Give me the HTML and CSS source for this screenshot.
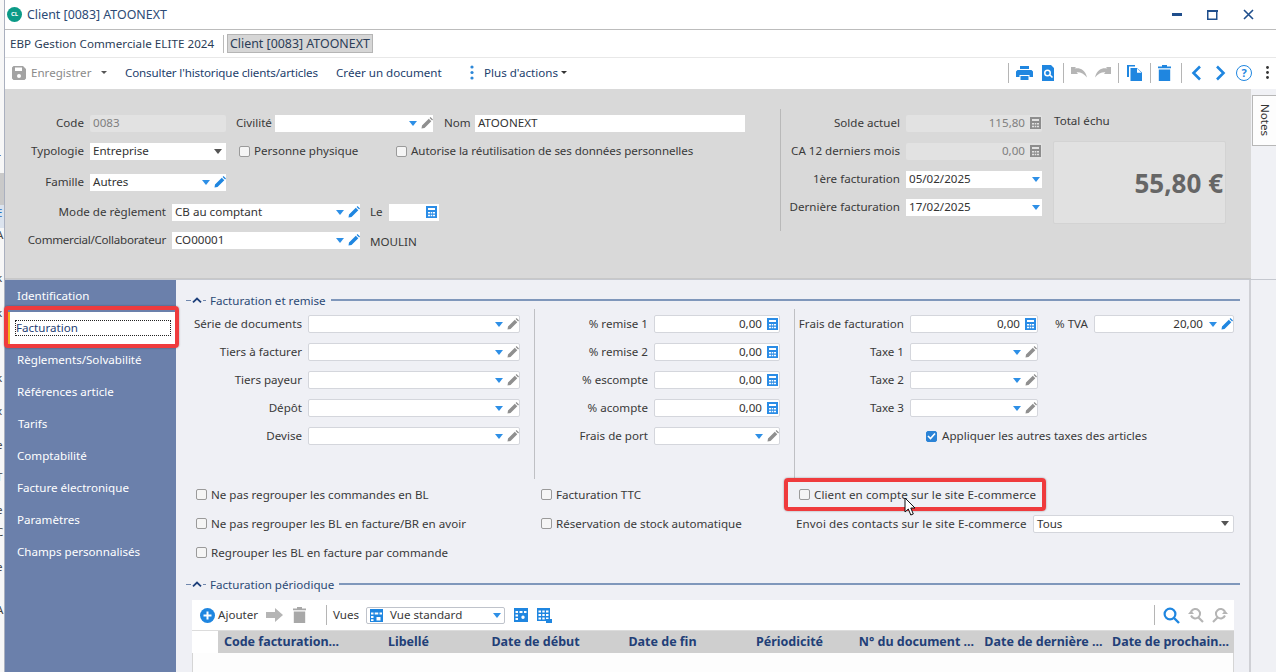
FILE: index.html
```html
<!DOCTYPE html>
<html lang="fr">
<head>
<meta charset="utf-8">
<title>Client [0083] ATOONEXT</title>
<link rel="stylesheet" href="styles.css">
</head>
<body>
<svg class="defs" width="0" height="0">
  <defs>
    <symbol id="pen" viewBox="0 0 12 12"><path d="M0.5 11.5 1 8.5 7.8 1.7 10.3 4.2 3.5 11ZM8.6 0.9 9.5 0 12 2.5 11.1 3.4Z"/></symbol>
    <symbol id="calc" viewBox="0 0 11 12"><path fill-rule="evenodd" d="M0 0H11V12H0ZM2 2V4H9V2ZM2 6V7.5H4V6ZM4.7 6V7.5H6.3V6ZM7 6V7.5H9V6ZM2 8.7V10.2H4V8.7ZM4.7 8.7V10.2H6.3V8.7ZM7 8.7V10.2H9V8.7Z"/></symbol>
  </defs>
</svg>
<div class="desktop">
  <div class="behind"><span class="band-grey"></span><span class="band-blue"></span><span class="f1">r</span><span class="f2">E</span><span class="f3">A</span><span class="f4">k</span><span class="f5">k</span><span class="f6">k</span><span class="f9">x</span><span class="f7">e</span><span class="f10">T</span><span class="f11">e</span><span class="f12">C</span><span class="f8">e</span><span class="f13">A</span></div>
  <div class="window">
    <header class="titlebar">
      <span class="appicon">CL</span>
      <span class="title">Client [0083] ATOONEXT</span>
      <span class="winbtns">
        <svg width="10" height="3"><rect width="10" height="3" fill="#1f4e8c"/></svg>
        <svg width="11" height="10"><rect x=".75" y=".75" width="9" height="8.5" fill="none" stroke="#1f4e8c" stroke-width="1.5"/><rect width="11" height="2" fill="#1f4e8c"/></svg>
        <svg width="11" height="11"><path d="M1 1 10 10M10 1 1 10" stroke="#1f4e8c" stroke-width="1.6"/></svg>
      </span>
    </header>
    <nav class="tabs">
      <span class="tab">EBP Gestion Commerciale ELITE 2024</span>
      <span class="tabsep"></span>
      <span class="tab current">Client [0083] ATOONEXT</span>
    </nav>
    <div class="toolbar">
      <svg class="ic-save" width="14" height="14" viewBox="0 0 14 14"><path fill="#a3a3a3" fill-rule="evenodd" d="M0 1.5 1.5 0H11L14 3V12.5L12.5 14H1.5L0 12.5ZM3 1.5V5H10V1.5ZM7 8A2 2 0 1 0 7 12 2 2 0 1 0 7 8Z"/></svg>
      <span class="tb-dis">Enregistrer</span>
      <span class="caret grey"></span>
      <span class="tb-link history">Consulter l'historique clients/articles</span>
      <span class="tb-link create">Créer un document</span>
      <svg class="ic-dots" width="4" height="15"><circle cx="2" cy="2" r="1.6" fill="#2c87d8"/><circle cx="2" cy="7.5" r="1.6" fill="#2c87d8"/><circle cx="2" cy="13" r="1.6" fill="#2c87d8"/></svg>
      <span class="tb-link more">Plus d'actions</span>
      <span class="caret dark"></span>
      <span class="tb-right">
        <span class="vsep"></span>
        <svg width="17" height="14" viewBox="0 0 17 14"><path fill="#1f86e0" fill-rule="evenodd" d="M4 0H13V3H4ZM1.5 4H15.5L17 5.5V11H13.5V9H3.5V11H0V5.5ZM4.5 10H12.5V14H4.5Z"/></svg>
        <svg class="ml2" width="12" height="16" viewBox="0 0 12 16"><path fill="#1f86e0" fill-rule="evenodd" d="M0 0H9L12 3V16H0ZM5.5 4.5A3.5 3.5 0 1 0 5.5 11.5 3.5 3.5 0 1 0 5.5 4.5ZM5.5 6A2 2 0 1 1 5.5 10 2 2 0 1 1 5.5 6Z"/><path d="M8 10 10.5 12.5" stroke="#fff" stroke-width="1.5"/></svg>
        <span class="vsep ml2"></span>
        <svg width="16" height="11" viewBox="0 0 16 11"><path fill="#b5b5b5" d="M0 0 5 0 3.6 1.6C8 0.5 14 2 16 10.5 13 6.5 9 4.8 5.6 5.2L7 7H0Z"/></svg>
        <svg class="ml1" width="16" height="11" viewBox="0 0 16 11"><path fill="#b5b5b5" d="M16 0 11 0 12.4 1.6C8 0.5 2 2 0 10.5 3 6.5 7 4.8 10.4 5.2L9 7H16Z"/></svg>
        <span class="vsep"></span>
        <svg class="ml1" width="15" height="16" viewBox="0 0 15 16"><path fill="#1f86e0" d="M0 0H8V1.5H2V12H0ZM3.5 3H10L15 7.5V16H3.5ZM10 3.6V7.8H14.5Z"/></svg>
        <span class="vsep ml1"></span>
        <svg width="13" height="16" viewBox="0 0 13 16"><path fill="#1f86e0" d="M4 0H9V1.5H13V3.3H0V1.5H4ZM.8 4.5H12.2V16H.8Z"/></svg>
        <span class="vsep ml3"></span>
        <svg class="ml2" width="11" height="16" viewBox="0 0 11 16"><path d="M9 1.5 2.5 8 9 14.5" fill="none" stroke="#1f86e0" stroke-width="2.6"/></svg>
        <svg class="ml6" width="11" height="16" viewBox="0 0 11 16"><path d="M2 1.5 8.5 8 2 14.5" fill="none" stroke="#1f86e0" stroke-width="2.6"/></svg>
        <span class="help ml3">?</span>
        <svg class="ml7" width="3" height="13"><circle cx="1.5" cy="1.5" r="1.4" fill="#333"/><circle cx="1.5" cy="6.5" r="1.4" fill="#333"/><circle cx="1.5" cy="11.5" r="1.4" fill="#333"/></svg>
      </span>
    </div>
    <div class="topzone">
      <section class="summary">
        <div class="sum-left">
          <div class="row r1">
            <label class="lbl w79">Code</label><span class="field ro w136 tl">0083</span>
            <label class="lbl civ">Civilité</label><span class="field w158 combo"><i class="tri"></i><svg class="pen off"><use href="#pen"/></svg></span>
            <label class="lbl nom">Nom</label><span class="field w270">ATOONEXT</span>
          </div>
          <div class="row r2">
            <label class="lbl w79">Typologie</label><span class="field w136 drop">Entreprise<i class="tri dark"></i></span>
            <span class="check cb1"></span><span class="txt physique">Personne physique</span>
            <span class="check cb2"></span><span class="txt tight">Autorise la réutilisation de ses données personnelles</span>
          </div>
          <div class="row r3">
            <label class="lbl w79">Famille</label><span class="field w136 combo">Autres<i class="tri"></i><svg class="pen"><use href="#pen"/></svg></span>
          </div>
          <div class="row r4">
            <label class="lbl w161">Mode de règlement</label><span class="field w188 combo">CB au comptant<i class="tri"></i><svg class="pen"><use href="#pen"/></svg></span>
            <label class="lbl le">Le</label><span class="field w50 combo"><svg class="calc"><use href="#calc"/></svg></span>
          </div>
          <div class="row r5">
            <label class="lbl w161 tighter">Commercial/Collaborateur</label><span class="field w188 combo">CO00001<i class="tri"></i><svg class="pen"><use href="#pen"/></svg></span>
            <span class="txt moulin">MOULIN</span>
          </div>
        </div>
        <div class="sum-sep"></div>
        <div class="sum-right">
          <div class="sum-fields">
            <div class="row s1"><label class="lbl w115">Solde actuel</label><span class="field ro w136 num">115,80<svg class="calc off"><use href="#calc"/></svg></span></div>
            <div class="row s2"><label class="lbl w115">CA 12 derniers mois</label><span class="field ro w136 num">0,00<svg class="calc off"><use href="#calc"/></svg></span></div>
            <div class="row s3"><label class="lbl w115">1ère facturation</label><span class="field w136 drop">05/02/2025<i class="tri"></i></span></div>
            <div class="row s4"><label class="lbl w115">Dernière facturation</label><span class="field w136 drop">17/02/2025<i class="tri"></i></span></div>
          </div>
          <div class="total">
            <div class="total-label">Total échu</div>
            <div class="total-box">55,80 €</div>
          </div>
        </div>
      </section>
      <aside class="notes-col"><span class="notes"><span>Notes</span></span></aside>
    </div>
    <div class="lower">
      <nav class="side">
        <a class="item">Identification</a>
        <a class="item active"><span class="focus">Facturation</span></a>
        <a class="item">Règlements/Solvabilité</a>
        <a class="item">Références article</a>
        <a class="item tarifs">Tarifs</a>
        <a class="item">Comptabilité</a>
        <a class="item">Facture électronique</a>
        <a class="item">Paramètres</a>
        <a class="item">Champs personnalisés</a>
      </nav>
      <main class="content">
        <div class="sechead"><span class="dash"></span><svg class="chev" width="10" height="6"><path d="M1 5.3 5 1.5 9 5.3" fill="none" stroke="#1d3f7a" stroke-width="1.8"/></svg><span class="dash short"></span><span class="sectitle">Facturation et remise</span><span class="secline"></span></div>
        <div class="formgrid">
          <div class="col c1">
            <div class="frow"><label class="lbl w110">Série de documents</label><span class="inp w212 combo"><i class="tri"></i><svg class="pen off"><use href="#pen"/></svg></span></div>
            <div class="frow"><label class="lbl w110">Tiers à facturer</label><span class="inp w212 combo"><i class="tri"></i><svg class="pen off"><use href="#pen"/></svg></span></div>
            <div class="frow"><label class="lbl w110">Tiers payeur</label><span class="inp w212 combo"><i class="tri"></i><svg class="pen off"><use href="#pen"/></svg></span></div>
            <div class="frow"><label class="lbl w110">Dépôt</label><span class="inp w212 combo"><i class="tri"></i><svg class="pen off"><use href="#pen"/></svg></span></div>
            <div class="frow"><label class="lbl w110">Devise</label><span class="inp w212 combo"><i class="tri"></i><svg class="pen off"><use href="#pen"/></svg></span></div>
          </div>
          <div class="col c2">
            <div class="frow"><label class="lbl w112">% remise 1</label><span class="inp w126 num">0,00<svg class="calc"><use href="#calc"/></svg></span></div>
            <div class="frow"><label class="lbl w112">% remise 2</label><span class="inp w126 num">0,00<svg class="calc"><use href="#calc"/></svg></span></div>
            <div class="frow"><label class="lbl w112">% escompte</label><span class="inp w126 num">0,00<svg class="calc"><use href="#calc"/></svg></span></div>
            <div class="frow"><label class="lbl w112">% acompte</label><span class="inp w126 num">0,00<svg class="calc"><use href="#calc"/></svg></span></div>
            <div class="frow"><label class="lbl w112">Frais de port</label><span class="inp w126 combo"><i class="tri"></i><svg class="pen off"><use href="#pen"/></svg></span></div>
          </div>
          <div class="col c3">
            <div class="frow"><label class="lbl w108">Frais de facturation</label><span class="inp w128 num">0,00<svg class="calc"><use href="#calc"/></svg></span><label class="lbl tva">% TVA</label><span class="inp w140 combo numc">20,00<i class="tri"></i><svg class="pen"><use href="#pen"/></svg></span></div>
            <div class="frow"><label class="lbl w108">Taxe 1</label><span class="inp w128 combo"><i class="tri"></i><svg class="pen off"><use href="#pen"/></svg></span></div>
            <div class="frow"><label class="lbl w108">Taxe 2</label><span class="inp w128 combo"><i class="tri"></i><svg class="pen off"><use href="#pen"/></svg></span></div>
            <div class="frow"><label class="lbl w108">Taxe 3</label><span class="inp w128 combo"><i class="tri"></i><svg class="pen off"><use href="#pen"/></svg></span></div>
            <div class="frow apply"><span class="check on"><svg width="9" height="8"><path d="M1 4 3.5 6.5 8 1.5" fill="none" stroke="#fff" stroke-width="1.6"/></svg></span><span class="txt">Appliquer les autres taxes des articles</span></div>
          </div>
        </div>
        <div class="options">
          <div class="optcol o1">
            <div class="opt"><span class="check"></span><span class="txt">Ne pas regrouper les commandes en BL</span></div>
            <div class="opt"><span class="check"></span><span class="txt">Ne pas regrouper les BL en facture/BR en avoir</span></div>
            <div class="opt"><span class="check"></span><span class="txt">Regrouper les BL en facture par commande</span></div>
          </div>
          <div class="optcol o2">
            <div class="opt"><span class="check"></span><span class="txt">Facturation TTC</span></div>
            <div class="opt"><span class="check"></span><span class="txt">Réservation de stock automatique</span></div>
          </div>
          <div class="optcol o3">
            <div class="opt ec"><span class="check"></span><span class="txt wide">Client en compte sur le site E-commerce</span></div>
            <div class="opt envoi"><span class="txt envoi-label wide">Envoi des contacts sur le site E-commerce</span><span class="inp tous drop">Tous<i class="tri dark"></i></span></div>
          </div>
        </div>
        <div class="sechead periodic"><span class="dash"></span><svg class="chev" width="10" height="6"><path d="M1 5.3 5 1.5 9 5.3" fill="none" stroke="#1d3f7a" stroke-width="1.8"/></svg><span class="dash short"></span><span class="sectitle">Facturation périodique</span><span class="secline"></span></div>
        <div class="panel">
          <div class="gridbar">
            <svg class="plus" width="15" height="15" viewBox="0 0 15 15"><circle cx="7.5" cy="7.5" r="7.5" fill="#1f86e0"/><path d="M7.5 3.5V11.5M3.5 7.5H11.5" stroke="#fff" stroke-width="2"/></svg>
            <span class="ajouter">Ajouter</span>
            <svg class="arrow" width="17" height="14" viewBox="0 0 17 14"><path fill="#b5b5b5" d="M0 4H9V0L17 7 9 14V10H0Z"/></svg>
            <svg class="trash" width="13" height="16" viewBox="0 0 13 16"><path fill="#a8a8a8" d="M4 0H9V1.5H13V3.3H0V1.5H4ZM.8 4.5H12.2V16H.8Z"/></svg>
            <span class="vsep g"></span>
            <span class="vues">Vues</span>
            <span class="viewsel">
              <svg width="13" height="13" viewBox="0 0 13 13"><path fill="#1f86e0" fill-rule="evenodd" d="M0 0H13V13H0ZM1 3.5V5.5H3.5V3.5ZM4.7 3.5V5.5H8.3V3.5ZM9.5 3.5V5.5H12V3.5ZM1 7V9H3.5V7ZM1 10.3V12H3.5V10.3ZM6.5 8V11.5H10.5V8Z"/></svg>
              <span>Vue standard</span><i class="tri"></i>
            </span>
            <svg class="gi" width="14" height="14" viewBox="0 0 14 14"><path fill="#1f86e0" fill-rule="evenodd" d="M0 0H14V14H0ZM1.5 3V5H4V3ZM5.5 3V5H8.5V3ZM10 3V5H12.5V3ZM1.5 6.5V8.5H4V6.5ZM1.5 10V12H4V10ZM9 7.5A1.7 1.7 0 1 0 9 10.9 1.7 1.7 0 1 0 9 7.5Z"/></svg>
            <svg class="gi2" width="15" height="15" viewBox="0 0 15 15"><path fill="#1f86e0" fill-rule="evenodd" d="M0 0H13V13H0ZM1.5 2.5V4.5H4V2.5ZM5.3 2.5V4.5H7.7V2.5ZM9 2.5V4.5H11.5V2.5ZM1.5 6V8H4V6ZM5.3 6V8H7.7V6ZM9 6V8H11.5V6ZM1.5 9.5V11.5H4V9.5ZM5.3 9.5V11.5H7.7V9.5ZM9 9.5V11.5H11.5V9.5Z"/><rect x="9" y="11" width="6" height="4" fill="#1f86e0"/></svg>
            <span class="bar-right">
              <span class="vsep g"></span>
              <svg width="17" height="17" viewBox="0 0 17 17"><circle cx="7" cy="7" r="5.4" fill="none" stroke="#1f86e0" stroke-width="2.2"/><path d="M11 11 16 16" stroke="#1f86e0" stroke-width="2.4"/></svg>
              <svg width="16" height="16" viewBox="0 0 16 16"><path d="M3.2 4.5A4.7 4.7 0 1 1 3 8.5" fill="none" stroke="#b5b5b5" stroke-width="2"/><path d="M10.5 10.5 15 15" stroke="#b5b5b5" stroke-width="2.2"/><path d="M0 7H6L3 3.5Z" fill="#b5b5b5"/></svg>
              <svg width="16" height="16" viewBox="0 0 16 16"><path d="M12.8 4.5A4.7 4.7 0 1 0 13 8.5" fill="none" stroke="#b5b5b5" stroke-width="2"/><path d="M5.5 10.5 1 15" stroke="#b5b5b5" stroke-width="2.2"/><path d="M16 7H10L13 3.5Z" fill="#b5b5b5"/></svg>
            </span>
          </div>
          <div class="gridhead">
            <span class="corner"></span>
            <span>Code facturation...</span><span>Libellé</span><span>Date de début</span><span>Date de fin</span><span>Périodicité</span><span>N° du document ...</span><span>Date de dernière ...</span><span>Date de prochain...</span>
          </div>
          <div class="gridbody"></div>
        </div>
      </main>
      <div class="rightgap"></div>
    </div>
    <div class="mark mark-side"></div>
    <div class="mark mark-ec"></div>
    <svg class="cursor" width="14" height="20" viewBox="0 0 14 20"><path d="M1 1V15L4.3 12 6.8 18 9.3 17 6.8 11H11Z" fill="#fff" stroke="#111" stroke-width="1"/></svg>
  </div>
</div>
</body>
</html>
```
FILE: styles.css
```css
* { box-sizing: border-box; }
html, body { margin: 0; height: 100%; }
body { width: 1276px; height: 672px; overflow: hidden; background: #fff; font: 11.6px/16px "Noto Sans", "DejaVu Sans", sans-serif; color: #3a3a3a; }
.defs { position: absolute; }
.desktop { display: flex; width: 1276px; height: 672px; }
.behind { width: 4px; flex: none; position: relative; overflow: hidden; background: #f7f7f7; }
.behind span { position: absolute; left: -4px; color: #444; }
.behind .band-grey { left: 0; top: 173px; width: 4px; height: 32px; background: #c9c9c9; }
.behind .band-blue { left: 0; top: 205px; width: 4px; height: 23px; background: #dbe3ee; }
.f1 { top: 149px; } .f2 { top: 205px; color: #1f6fc0 !important; } .f3 { top: 227px; } .f4 { top: 270px; } .f5 { top: 305px; } .f6 { top: 370px; } .f9 { top: 403px; } .f7 { top: 437px; } .f10 { top: 469px; } .f11 { top: 502px; } .f12 { top: 524px; } .f8 { top: 559px; } .f13 { top: 602px; }
.window { flex: 1; position: relative; display: flex; flex-direction: column; height: 672px; border-left: 1px solid #aab0bf; min-width: 0; background: #fff; }

.titlebar { height: 30px; flex: none; display: flex; align-items: center; border-bottom: 1px solid #bcbcbc; padding-left: 1px; }
.appicon { width: 15px; height: 15px; border-radius: 50%; background: #0b9a87; color: #fff; font-size: 6px; font-weight: 700; line-height: 15px; text-align: center; margin-left: 1px; margin-right: 5px; }
.title { color: #2c4a75; font-size: 12.4px; }
.winbtns { margin-left: auto; display: flex; align-items: center; gap: 25px; padding-right: 22px; }

.tabs { height: 28px; flex: none; display: flex; align-items: center; border-bottom: 1px solid #e8e8e8; padding-left: 5px; color: #2b3d57; }
.tab { white-space: nowrap; }
.tabs .tab:first-child { width: 205px; letter-spacing: .05px; }
.tabsep { width: 1px; height: 18px; background: #bbb; margin: 0 3px 0 8px; }
.tab.current { background: #d6d6d6; border: 1px solid #b5b5b5; height: 19px; line-height: 17px; padding: 0 2px; font-size: 12.4px; }

.toolbar { height: 31px; flex: none; display: flex; align-items: center; padding: 0 0 2px 7px; color: #22406c; }
.tb-dis { color: #8a8a8a; margin-left: 5px; width: 60px; white-space: nowrap; }
.caret { display: inline-block; border: 3px solid transparent; border-top: 3px solid #555; border-bottom: 0; }
.caret.grey { margin-left: 10px; }
.caret.dark { margin-left: 0; border-top-color: #333; }
.tb-link { white-space: nowrap; }
.history { margin-left: 18px; width: 194px; letter-spacing: -.14px; }
.create { margin-left: 17px; width: 107px; }
.ic-dots { margin-left: 27px; }
.more { margin-left: 10px; width: 77px; }
.tb-right { margin-left: auto; display: flex; align-items: center; gap: 7px; padding-right: 7px; }
.ml1 { margin-left: 1px; } .ml2 { margin-left: 2px; } .ml3 { margin-left: 3px; } .ml6 { margin-left: 6px; } .ml7 { margin-left: 7px; }
.vsep { width: 1px; height: 20px; background: #b5b5b5; display: inline-block; flex: none; }
.help { width: 16px; height: 16px; border: 1.5px solid #1f86e0; border-radius: 50%; color: #1f86e0; font-weight: 700; font-size: 11px; line-height: 13px; text-align: center; }

.topzone { height: 190px; flex: none; display: flex; }
.summary { width: 1246px; background: #d9d9d9; display: flex; flex: none; border-bottom: 1px solid #c8c8c8; }
.notes-col { flex: 1; background: #f0f1f5; padding: 6px 0 0 1px; }
.notes { display: flex; width: 24px; height: 51px; background: #fdfdfd; border: 1px solid #b7b7b7; border-right: 0; align-items: center; justify-content: center; }
.notes span { writing-mode: vertical-rl; color: #333; }

.sum-left { width: 775px; flex: none; padding-top: 24px; }
.row { display: flex; align-items: center; height: 20px; }
.r2 { margin-top: 8px; }
.r3 { margin-top: 11px; }
.r4 { margin-top: 10px; }
.r5 { margin-top: 8px; }
.lbl { text-align: right; white-space: nowrap; flex: none; color: #3a3a3a; }
.tighter { letter-spacing: -.25px; }
.tight { letter-spacing: -.08px; }
.wide { letter-spacing: .1px; }
.w79 { width: 79px; margin-right: 6px; }
.w161 { width: 161px; margin-right: 6px; }
.w115 { width: 119px; margin-right: 6px; }
.w110 { width: 110px; margin-right: 6px; }
.w112 { width: 113px; margin-right: 6px; }
.w108 { width: 109px; margin-right: 6px; }
.civ { margin: 0 6px 0 10px; width: 33px; }
.nom { margin: 0 5px 0 11px; width: 26px; }
.le { margin: 0 5px 0 10px; width: 14px; text-align: left; }
.tva { width: 40px; margin: 0 6px 0 10px; }

.field, .inp { display: flex; align-items: center; flex: none; height: 17px; background: #fff; padding: 0 3px; color: #333; position: relative; white-space: nowrap; }
.inp { border: 1px solid #d4d6dc; border-radius: 2px; height: 18px; }
.field.ro { background: #e2e2e2; color: #808080; border-radius: 2px; }
.w136 { width: 136px; } .w158 { width: 158px; } .w270 { width: 270px; } .w188 { width: 188px; } .w50 { width: 50px; }
.w212 { width: 212px; } .w126 { width: 126px; } .w128 { width: 128px; } .w140 { width: 140px; }
.tri { display: block; margin-left: auto; flex: none; width: 0; height: 0; border-left: 4px solid transparent; border-right: 4px solid transparent; border-top: 5px solid #2d8fe6; }
.tri.dark { border-top-color: #555; }
.drop .tri { margin-right: -1px; }
.drop .tri.dark { margin-right: 1px; }
.combo { padding-right: 0; }
.pen { width: 12px; height: 12px; fill: #1f86e0; margin-left: 4px; flex: none; }
.pen.off { fill: #8f8f8f; }
.calc { width: 11px; height: 12px; fill: #2a8ce6; flex: none; }
.calc.off { fill: #8d8d8d; }
.combo .calc { margin: 0 2px 0 auto; }
.num { justify-content: flex-end; padding-right: 1px; }
.num .calc { margin-left: 5px; }
.numc { justify-content: flex-end; }
.numc .tri { margin-left: 6px; }

.check { width: 11px; height: 11px; border: 1px solid #9a9a9a; border-radius: 2px; background: #f5f5f5; flex: none; display: inline-flex; align-items: center; justify-content: center; }
.check.on { background: #2b83d6; border-color: #2b83d6; }
.cb1 { margin: 0 4px 0 13px; }
.cb2 { margin: 0 4px 0 39px; }
.physique { width: 103px; }
.txt { white-space: nowrap; color: #3a3a3a; }
.moulin { margin-left: 10px; margin-top: 4px; }

.sum-sep { width: 1px; height: 122px; background: #b9b9b9; margin-top: 20px; flex: none; }
.sum-right { flex: none; display: flex; padding-top: 24px; }
.sum-fields { width: 262px; }
.s2, .s3, .s4 { margin-top: 8px; }
.total { margin-left: 10px; }
.total-label { height: 16px; margin-bottom: 12px; margin-left: 1px; }
.total-box { width: 173px; height: 83px; background: #e1e1e1; border: 1px solid #d3d3d3; border-radius: 2px; display: flex; align-items: center; justify-content: flex-end; padding-right: 2px; font-size: 26px; font-weight: 700; color: #666; }

.lower { flex: 1; display: flex; min-height: 0; border-top: 1px solid #c5c8cf; }
.side { width: 171px; flex: none; background: #6b80ab; display: flex; flex-direction: column; }
.item { height: 32px; line-height: 32px; padding-left: 12px; color: #fff; white-space: nowrap; }
.tarifs { padding-left: 13px; }
.item.active { background: #fff; color: #1f3f75; margin-left: 3px; padding-left: 5px; border-left: 2px solid #f2b51d; display: flex; align-items: center; }
.focus { width: 156px; height: 16px; line-height: 14px; border: 1px dotted #222; display: block; }
.content { width: 1073px; flex: none; background: #eff0f5; padding: 12px 0 0 9px; display: flex; flex-direction: column; min-height: 0; }
.rightgap { flex: 1; background: #f0f1f5; border-left: 2px solid #cfd0d5; }
.sechead { display: flex; align-items: center; height: 16px; flex: none; padding-left: 1px; }
.dash { width: 5px; height: 1px; background: #6f87ad; }
.dash.short { width: 3px; }
.chev { margin: 0 1px 0 1px; }
.sectitle { margin: 2px 0 0 4px; color: #2c4a75; white-space: nowrap; }
.secline { flex: 1; height: 2px; margin: 0 9px 0 5px; background: #7f97bb; }
.periodic { margin-top: 9px; }

.formgrid { display: grid; grid-template-columns: 350px 260px 1fr; height: 170px; margin-top: 1px; }
.col { padding-top: 6px; display: flex; flex-direction: column; gap: 10px; border-right: 1px solid #bfc0c4; }
.c3 { border-right: 0; }
.frow { display: flex; align-items: center; height: 18px; }
.c1 .w110 { margin-left: 7px; }
.apply { padding-left: 131px; gap: 5px; }

.options { display: grid; grid-template-columns: 345px 258px 1fr; margin-top: 1px; height: 87px; padding-left: 11px; }
.optcol { display: flex; flex-direction: column; }
.opt { display: flex; align-items: center; height: 29px; gap: 4px; }
.envoi { margin-left: -3px; gap: 5px; }
.envoi-label { width: 232px; }
.tous { width: 201px; }

.panel { flex: 1; margin: 8px 15px 0 7px; background: #fff; display: flex; flex-direction: column; min-height: 0; }
.gridbar { height: 31px; flex: none; display: flex; align-items: center; padding-left: 8px; border-bottom: 1px solid #dcdcdc; }
.ajouter { margin-left: 3px; width: 41px; color: #3a3a3a; white-space: nowrap; }
.arrow { margin-left: 7px; }
.trash { margin-left: 10px; }
.gridbar > .vsep { margin-left: 20px; }
.vues { margin-left: 6px; width: 27px; }
.viewsel { display: flex; align-items: center; width: 139px; height: 17px; margin-left: 6px; border: 1px solid #bfc3cb; border-radius: 2px; padding: 0 3px; gap: 7px; background: #fff; }
.viewsel .tri { margin-left: auto; }
.gi { margin-left: 9px; }
.gi2 { margin-left: 9px; }
.bar-right { margin-left: auto; display: flex; align-items: center; gap: 8px; padding-right: 6px; }
.gridhead { height: 22px; flex: none; display: grid; grid-template-columns: 26px repeat(8, 127px); background: #cfcfcf; align-items: center; font-weight: 700; font-size: 12.5px; color: #223f78; text-align: center; white-space: nowrap; overflow: hidden; }
.corner { background: #fff; height: 22px; }
.gridbody { flex: 1; background: #fdfdfd; border-left: 1px solid #d5d5d5; border-right: 1px solid #d5d5d5; }

.mark { position: absolute; border: 4px solid #ef3b3d; border-radius: 4px; pointer-events: none; box-shadow: 0 0 2px rgba(0,0,0,.4); }
.mark-side { left: -1px; top: 306px; width: 175px; height: 42px; }
.mark-ec { left: 779px; top: 478px; width: 262px; height: 33px; }
.cursor { position: absolute; left: 899px; top: 497px; }
```
